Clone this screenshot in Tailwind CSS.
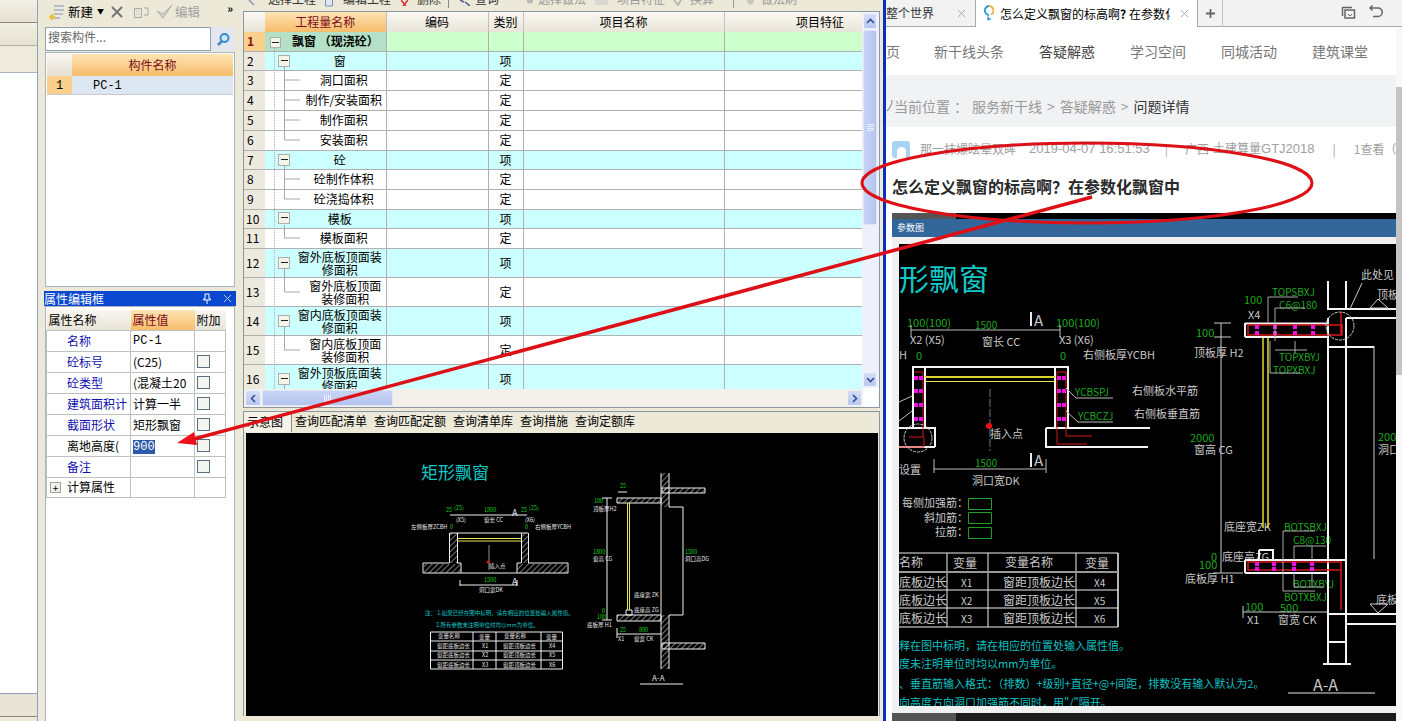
<!DOCTYPE html>
<html lang="zh-CN">
<head>
  <meta charset="UTF-8" />
  <title>飘窗定义</title>
  <script src="https://cdn.jsdelivr.net/npm/@tailwindcss/browser@4"></script>
</head>
<body class="relative w-[1402px] h-[721px] overflow-hidden bg-[#ece9d8] text-xs text-black [font-family:'Noto_Sans_CJK_SC',sans-serif]">
<div class="flex h-full">

  <!-- far left panel -->
  <div class="w-[38px] shrink-0 flex flex-col border-r border-[#8fa0b8]">
    <div class="h-[23px] bg-gradient-to-b from-[#f2efe4] to-[#e6e2d2] border-b border-[#8d897a]"></div>
    <div class="h-[23px] bg-gradient-to-b from-[#f2efe4] to-[#e6e2d2] border-b border-[#b5b1a0]"></div>
    <div class="h-[27px] bg-[#eeebdd] border-b border-[#aab3c0]"></div>
    <div class="flex-1 bg-white border-b border-[#8fa0b8]"></div>
    <div class="h-[23px] bg-[#e8e5d6] border-b border-[#8d897a]"></div>
    <div class="h-[4px] bg-[#ece9d8]"></div>
  </div>

  <!-- component list column -->
  <div class="w-[205px] shrink-0 flex flex-col pl-[6px] pr-[8px] bg-[#ece9d8]">
    <div class="h-[27px] flex items-center text-[12.500px] shrink-0 pb-[3px]">
      <svg width="20" height="20" viewBox="0 0 20 20" class="ml-[3px]">
        <path d="M7 4h10M7 8h10M7 12h9M7 16h6" stroke="#7d92b8" stroke-width="1.2"/>
        <path d="M5 12v6M2 15h6" stroke="#e8c040" stroke-width="2.4"/>
      </svg>
      <span class="ml-[1px]">新建</span>
      <span class="ml-[4px] text-[7px]">▼</span>
      <svg width="14" height="14" viewBox="0 0 14 14" class="ml-[6px]"><path d="M2 2l10 10M12 2L2 12" stroke="#707070" stroke-width="1.8"/></svg>
      <svg width="17" height="14" viewBox="0 0 17 14" class="ml-[9px]"><path d="M1.500 3.500h7v9h-7zM11 3h4v7h-4" fill="none" stroke="#a8a8a8"/><path d="M3 6h4M3 9h4" stroke="#c8c8c8"/></svg>
      <svg width="17" height="16" viewBox="0 0 17 16" class="ml-[6px]"><path d="M1 7l6 7 9-13-9 9z" fill="#d4d4cc" stroke="#b0b0a8"/></svg>
      <span class="ml-[2px] text-[#a0a0a0]">编辑</span>
      <span class="ml-auto mr-[2px] text-[11px] font-bold leading-none -mt-[8px]">»</span>
    </div>
    <div class="h-[24px] flex shrink-0 ml-[1px]">
      <div class="w-[166px] bg-white border border-[#8fa0b0] pl-[2px] text-[12px] leading-[18px] text-[#666]">搜索构件...</div>
      <div class="flex-1 flex items-center justify-center bg-[#e4e8ee]">
        <svg width="15" height="15" viewBox="0 0 15 15"><circle cx="8.500" cy="6" r="4" fill="#cfe6f8" stroke="#3d8ac8" stroke-width="2"/><path d="M5.500 9.500L2 13" stroke="#3d8ac8" stroke-width="2.600"/></svg>
      </div>
    </div>
    <div class="h-[235px] shrink-0 mt-[1px] ml-[1px] bg-white border border-[#a8b4c0] p-[1px]">
      <div class="flex h-[22px]">
        <div class="w-[25px] bg-gradient-to-b from-[#f8f6f0] to-[#e4e0d4]"></div>
        <div class="flex-1 bg-gradient-to-b from-[#fde4b4] to-[#f6bc68] text-center leading-[21px] text-[#7a0c20]">构件名称</div>
      </div>
      <div class="flex h-[19px] border-b border-[#c8ccd0]">
        <div class="w-[25px] bg-[#fbd08c] pl-[9px] leading-[20px] [font-family:'Liberation_Mono',monospace]">1</div>
        <div class="flex-1 bg-[#dde7f2] pl-[21px] leading-[20px] [font-family:'Liberation_Mono',monospace]">PC-1</div>
      </div>
    </div>
    <div class="h-[15px] shrink-0 mt-[4px] -mr-[1px] bg-[#0a48d0] text-white flex items-center text-[12px]">
      <span>属性编辑框</span>
      <svg width="10" height="11" viewBox="0 0 10 11" class="ml-auto"><path d="M3 1h4v5h1.500v1H1.500V6H3zM5 7v4" fill="none" stroke="#fff"/></svg>
      <svg width="9" height="9" viewBox="0 0 9 9" class="ml-[11px] mr-[4px]"><path d="M1 1l7 7M8 1L1 8" stroke="#b8ccf0"/></svg>
    </div>
    <div class="flex-1 ml-[1px] bg-white border border-[#a8b4c0] border-b-0 pt-[3px] text-[12px]">
      <table class="table-fixed border-collapse w-[179px]">
        <colgroup><col class="w-[84px]"/><col class="w-[64px]"/><col class="w-[31px]"/></colgroup>
        <tr class="h-[20px] bg-gradient-to-b from-[#f8f6f0] to-[#e8e4d8]">
          <td class="pl-[2px]">属性名称</td>
          <td class="pl-[2px] bg-gradient-to-b from-[#fde4b4] to-[#f6bc68] text-[#7a0c20]">属性值</td>
          <td class="pl-[2px]">附加</td>
        </tr>
        <tr class="h-[21px] border border-[#c0c0c0]">
          <td class="border border-[#c0c0c0] pl-[20px] text-[#1010b0]">名称</td>
          <td class="border border-[#c0c0c0] pl-[2px] [font-family:'Liberation_Mono',monospace]">PC-1</td>
          <td class="border border-[#c0c0c0]"></td>
        </tr>
        <tr class="h-[21px]">
          <td class="border border-[#c0c0c0] pl-[20px] text-[#1010b0]">砼标号</td>
          <td class="border border-[#c0c0c0] pl-[2px]">(C25)</td>
          <td class="border border-[#c0c0c0]"><div class="ml-[2px] w-[13px] h-[13px] border border-[#5a7080] bg-[#f4f4f0]"></div></td>
        </tr>
        <tr class="h-[21px]">
          <td class="border border-[#c0c0c0] pl-[20px] text-[#1010b0]">砼类型</td>
          <td class="border border-[#c0c0c0] pl-[2px] whitespace-nowrap overflow-hidden">(混凝土20</td>
          <td class="border border-[#c0c0c0]"><div class="ml-[2px] w-[13px] h-[13px] border border-[#5a7080] bg-[#f4f4f0]"></div></td>
        </tr>
        <tr class="h-[21px]">
          <td class="border border-[#c0c0c0] pl-[20px] whitespace-nowrap overflow-hidden text-[#1010b0]">建筑面积计</td>
          <td class="border border-[#c0c0c0] pl-[2px]">计算一半</td>
          <td class="border border-[#c0c0c0]"><div class="ml-[2px] w-[13px] h-[13px] border border-[#5a7080] bg-[#f4f4f0]"></div></td>
        </tr>
        <tr class="h-[21px]">
          <td class="border border-[#c0c0c0] pl-[20px] text-[#1010b0]">截面形状</td>
          <td class="border border-[#c0c0c0] pl-[2px]">矩形飘窗</td>
          <td class="border border-[#c0c0c0]"><div class="ml-[2px] w-[13px] h-[13px] border border-[#5a7080] bg-[#f4f4f0]"></div></td>
        </tr>
        <tr class="h-[21px]">
          <td class="border border-[#c0c0c0] pl-[20px] whitespace-nowrap overflow-hidden">离地高度(</td>
          <td class="border border-[#c0c0c0] pl-[2px]"><span class="bg-[#2a5aa8] text-white [font-family:'Liberation_Mono',monospace]">900</span></td>
          <td class="border border-[#c0c0c0]"><div class="ml-[2px] w-[13px] h-[13px] border border-[#5a7080] bg-[#f4f4f0]"></div></td>
        </tr>
        <tr class="h-[21px]">
          <td class="border border-[#c0c0c0] pl-[20px] text-[#1010b0]">备注</td>
          <td class="border border-[#c0c0c0]"></td>
          <td class="border border-[#c0c0c0]"><div class="ml-[2px] w-[13px] h-[13px] border border-[#5a7080] bg-[#f4f4f0]"></div></td>
        </tr>
        <tr class="h-[20px]">
          <td class="border border-[#c0c0c0] whitespace-nowrap">
            <div class="flex items-center pl-[3px]">
              <span class="w-[11px] h-[11px] border border-[#a0a0a0] bg-[#f0f0ea] text-[10px] leading-[9px] text-center">+</span>
              <span class="ml-[6px]">计算属性</span>
            </div>
          </td>
          <td class="border border-[#c0c0c0]"></td>
          <td class="border border-[#c0c0c0]"></td>
        </tr>
      </table>
    </div>
  </div>

  <!-- quantity grid and drawing -->
  <div class="w-[640px] shrink-0 flex flex-col bg-[#ece9d8]">
    <!-- toolbar, cut off by the top of the picture -->
    <div class="h-[11px] shrink-0 overflow-hidden flex items-start whitespace-nowrap text-[12px] leading-[16px] text-[#333] pl-[5px]">
      <svg width="8" height="6" viewBox="0 0 8 6"><path d="M1 0l5 5" stroke="#8a9ab8" stroke-width="1.500"/></svg>
      <span class="ml-[12px] w-[48px] -mt-[9px]">选择工程</span>
      <svg width="8" height="7" viewBox="0 0 8 7" class="ml-[9px]"><path d="M.5 0v6h7V0" fill="#dfe6f2" stroke="#7d92b8"/></svg>
      <span class="ml-[10px] w-[48px] -mt-[9px]">编辑工程</span>
      <svg width="7" height="6" viewBox="0 0 7 6" class="ml-[10px]"><path d="M0 0l5 6M7 0L2 6" stroke="#d83030" stroke-width="1.500"/></svg>
      <span class="ml-[9px] w-[24px] -mt-[9px]">删除</span>
      <div class="ml-[7px] w-px h-[8px] bg-[#888]"></div>
      <svg width="10" height="6" viewBox="0 0 10 6" class="ml-[11px]"><path d="M0 0l4 2M5 2l5 4" stroke="#50608a" stroke-width="1.600"/></svg>
      <span class="ml-[5px] w-[24px] -mt-[9px]">查询</span>
      <svg width="6" height="5" viewBox="0 0 6 5" class="ml-[28px]"><circle cx="3" cy="0" r="3.500" fill="#b8b8b8"/></svg>
      <span class="ml-[5px] w-[48px] -mt-[9px] text-[#999]">选择做法</span>
      <svg width="13" height="6" viewBox="0 0 13 6" class="ml-[9px]"><path d="M0 0h13v5H0z" fill="#d8d8d0"/></svg>
      <span class="ml-[9px] w-[48px] -mt-[9px] text-[#999]">项目特征</span>
      <svg width="9" height="6" viewBox="0 0 9 6" class="ml-[8px]"><path d="M1 0l4 5 3-5" fill="none" stroke="#b0b0a8" stroke-width="1.500"/></svg>
      <span class="ml-[8px] w-[24px] -mt-[9px] text-[#999]">换算</span>
      <div class="ml-[19px] w-px h-[8px] bg-[#999]"></div>
      <svg width="7" height="6" viewBox="0 0 7 6" class="ml-[13px]"><circle cx="3.500" cy="1" r="3.500" fill="#c8c8c0"/></svg>
      <span class="ml-[7px] -mt-[9px] text-[#999]">做法刷</span>
    </div>
    <div class="relative h-[397px] shrink-0 w-[637px] border border-[#8a96a4] bg-white overflow-hidden">
      <table class="table-fixed border-collapse w-[618px] text-[12px] text-center">
        <colgroup><col class="w-[21px]"/><col class="w-[121px]"/><col class="w-[102px]"/><col class="w-[35px]"/><col class="w-[201px]"/><col class="w-[138px]"/></colgroup>
        <tr class="h-[20px] bg-gradient-to-b from-[#faf8f2] to-[#e8e4d8]">
          <td></td>
          <td class="bg-gradient-to-b from-[#fde4b4] to-[#f6bc68] text-[#7a0c20]">工程量名称</td>
          <td class="border-l border-[#c0c0c0]">编码</td>
          <td class="border-l border-[#c0c0c0]">类别</td>
          <td class="border-l border-[#c0c0c0]">项目名称</td>
          <td class="border-l border-[#c0c0c0] text-right pr-[18px]">项目特征</td>
        </tr>
        <tr class="h-[19px] bg-[#ccffcc] border-b border-[#b0b0b0]"><td class="bg-[#fbd08c] text-[#8a1010] font-bold text-left pl-[3px]">1</td><td class="bg-[#b4e0c8] font-bold pl-[27px] whitespace-nowrap text-left">飘窗 （现浇砼）</td><td class="border-l border-[#b0b0b0]"></td><td class="border-l border-[#b0b0b0]"></td><td class="border-l border-[#b0b0b0]"></td><td class="border-l border-[#b0b0b0]"></td></tr>
        <tr class="h-[19px] bg-[#ccffff] border-b border-[#b0b0b0]"><td class="bg-[#ece9df] text-left pl-[3px]">2</td><td class="pl-[29px]">窗</td><td class="border-l border-[#b0b0b0]"></td><td class="border-l border-[#b0b0b0]">项</td><td class="border-l border-[#b0b0b0]"></td><td class="border-l border-[#b0b0b0]"></td></tr>
        <tr class="h-[20px] border-b border-[#b0b0b0]"><td class="bg-[#ece9df] text-left pl-[3px]">3</td><td class="pl-[37px]">洞口面积</td><td class="border-l border-[#b0b0b0]"></td><td class="border-l border-[#b0b0b0]">定</td><td class="border-l border-[#b0b0b0]"></td><td class="border-l border-[#b0b0b0]"></td></tr>
        <tr class="h-[20px] border-b border-[#b0b0b0]"><td class="bg-[#ece9df] text-left pl-[3px]">4</td><td class="pl-[37px] whitespace-nowrap">制作/安装面积</td><td class="border-l border-[#b0b0b0]"></td><td class="border-l border-[#b0b0b0]">定</td><td class="border-l border-[#b0b0b0]"></td><td class="border-l border-[#b0b0b0]"></td></tr>
        <tr class="h-[20px] border-b border-[#b0b0b0]"><td class="bg-[#ece9df] text-left pl-[3px]">5</td><td class="pl-[37px]">制作面积</td><td class="border-l border-[#b0b0b0]"></td><td class="border-l border-[#b0b0b0]">定</td><td class="border-l border-[#b0b0b0]"></td><td class="border-l border-[#b0b0b0]"></td></tr>
        <tr class="h-[20px] border-b border-[#b0b0b0]"><td class="bg-[#ece9df] text-left pl-[3px]">6</td><td class="pl-[37px]">安装面积</td><td class="border-l border-[#b0b0b0]"></td><td class="border-l border-[#b0b0b0]">定</td><td class="border-l border-[#b0b0b0]"></td><td class="border-l border-[#b0b0b0]"></td></tr>
        <tr class="h-[19px] bg-[#ccffff] border-b border-[#b0b0b0]"><td class="bg-[#ece9df] text-left pl-[3px]">7</td><td class="pl-[29px]">砼</td><td class="border-l border-[#b0b0b0]"></td><td class="border-l border-[#b0b0b0]">项</td><td class="border-l border-[#b0b0b0]"></td><td class="border-l border-[#b0b0b0]"></td></tr>
        <tr class="h-[20px] border-b border-[#b0b0b0]"><td class="bg-[#ece9df] text-left pl-[3px]">8</td><td class="pl-[37px]">砼制作体积</td><td class="border-l border-[#b0b0b0]"></td><td class="border-l border-[#b0b0b0]">定</td><td class="border-l border-[#b0b0b0]"></td><td class="border-l border-[#b0b0b0]"></td></tr>
        <tr class="h-[20px] border-b border-[#b0b0b0]"><td class="bg-[#ece9df] text-left pl-[3px]">9</td><td class="pl-[37px]">砼浇捣体积</td><td class="border-l border-[#b0b0b0]"></td><td class="border-l border-[#b0b0b0]">定</td><td class="border-l border-[#b0b0b0]"></td><td class="border-l border-[#b0b0b0]"></td></tr>
        <tr class="h-[19px] bg-[#ccffff] border-b border-[#b0b0b0]"><td class="bg-[#ece9df] text-left pl-[2px]">10</td><td class="pl-[29px]">模板</td><td class="border-l border-[#b0b0b0]"></td><td class="border-l border-[#b0b0b0]">项</td><td class="border-l border-[#b0b0b0]"></td><td class="border-l border-[#b0b0b0]"></td></tr>
        <tr class="h-[20px] border-b border-[#b0b0b0]"><td class="bg-[#ece9df] text-left pl-[2px]">11</td><td class="pl-[37px]">模板面积</td><td class="border-l border-[#b0b0b0]"></td><td class="border-l border-[#b0b0b0]">定</td><td class="border-l border-[#b0b0b0]"></td><td class="border-l border-[#b0b0b0]"></td></tr>
        <tr class="h-[29px] bg-[#ccffff] border-b border-[#b0b0b0] leading-[13px]"><td class="bg-[#ece9df] text-left pl-[2px]">12</td><td class="pl-[29px]">窗外底板顶面装修面积</td><td class="border-l border-[#b0b0b0]"></td><td class="border-l border-[#b0b0b0]">项</td><td class="border-l border-[#b0b0b0]"></td><td class="border-l border-[#b0b0b0]"></td></tr>
        <tr class="h-[29px] border-b border-[#b0b0b0] leading-[13px]"><td class="bg-[#ece9df] text-left pl-[2px]">13</td><td class="pl-[40px]">窗外底板顶面装修面积</td><td class="border-l border-[#b0b0b0]"></td><td class="border-l border-[#b0b0b0]">定</td><td class="border-l border-[#b0b0b0]"></td><td class="border-l border-[#b0b0b0]"></td></tr>
        <tr class="h-[29px] bg-[#ccffff] border-b border-[#b0b0b0] leading-[13px]"><td class="bg-[#ece9df] text-left pl-[2px]">14</td><td class="pl-[29px]">窗内底板顶面装修面积</td><td class="border-l border-[#b0b0b0]"></td><td class="border-l border-[#b0b0b0]">项</td><td class="border-l border-[#b0b0b0]"></td><td class="border-l border-[#b0b0b0]"></td></tr>
        <tr class="h-[29px] border-b border-[#b0b0b0] leading-[13px]"><td class="bg-[#ece9df] text-left pl-[2px]">15</td><td class="pl-[40px]">窗内底板顶面装修面积</td><td class="border-l border-[#b0b0b0]"></td><td class="border-l border-[#b0b0b0]">定</td><td class="border-l border-[#b0b0b0]"></td><td class="border-l border-[#b0b0b0]"></td></tr>
        <tr class="h-[29px] bg-[#ccffff] leading-[13px]"><td class="bg-[#ece9df] text-left pl-[2px]">16</td><td class="pl-[29px]">窗外顶板底面装修面积</td><td class="border-l border-[#b0b0b0]"></td><td class="border-l border-[#b0b0b0]">项</td><td class="border-l border-[#b0b0b0]"></td><td class="border-l border-[#b0b0b0]"></td></tr>
      </table>

      <!-- tree connectors; coordinates are the grid's own -->
      <svg class="absolute left-0 top-0" width="60" height="377" viewBox="244 12 60 377" fill="none">
        <path d="M274.500 48V389" stroke="#b0b0b0" stroke-dasharray="1 1"/>
        <path d="M284.500 67V140H300M284 80h16M284 100h16M284 120h16M284.500 166V199H300M284 179h16M284.500 225V238H300M284.500 269V292H300M284.500 327V350H300M284.500 385V389" stroke="#a8a8a8"/>
        <g fill="#f4f4ea" stroke="#a8b0a8">
          <rect x="270.500" y="37.500" width="10" height="10"/><rect x="278.500" y="55.500" width="11" height="11"/><rect x="278.500" y="154.500" width="11" height="11"/><rect x="278.500" y="212.500" width="11" height="11"/><rect x="278.500" y="257.500" width="11" height="11"/><rect x="278.500" y="315.500" width="11" height="11"/><rect x="278.500" y="373.500" width="11" height="11"/>
        </g>
        <path d="M272 42.500h7M281 60.500h7M281 159.500h7M281 217.500h7M281 262.500h7M281 320.500h7M281 378.500h7" stroke="#222"/>
      </svg>

      <!-- vertical scrollbar -->
      <div class="absolute right-0 top-0 w-[17px] h-[376px] bg-[#eef1fa] flex flex-col pl-px pt-px pb-px pr-[2px]">
        <div class="h-[16px] bg-gradient-to-b from-[#d4def6] to-[#b8c8f0] rounded-[2px] border border-[#eef2fc] flex items-center justify-center">
          <svg width="9" height="6" viewBox="0 0 9 6"><path d="M1 5l3.500-3.500L8 5" fill="none" stroke="#334f90" stroke-width="1.600"/></svg>
        </div>
        <div class="h-[195px] mt-px bg-gradient-to-r from-[#c8d4f6] to-[#b4c4ee] rounded-[2px] border border-[#e0e6f8] flex items-center justify-center">
          <svg width="7" height="7" viewBox="0 0 7 7"><path d="M0 .5h7M0 2.500h7M0 4.500h7M0 6.500h7" stroke="#eef2fc"/></svg>
        </div>
        <div class="flex-1"></div>
        <div class="h-[15px] bg-gradient-to-b from-[#d4def6] to-[#b8c8f0] rounded-[2px] border border-[#eef2fc] flex items-center justify-center">
          <svg width="9" height="6" viewBox="0 0 9 6"><path d="M1 1l3.500 3.500L8 1" fill="none" stroke="#334f90" stroke-width="1.600"/></svg>
        </div>
      </div>
      <!-- horizontal scrollbar -->
      <div class="absolute left-0 top-[377px] w-[619px] h-[18px] bg-[#f2f0e8] flex p-px">
        <div class="w-[16px] bg-gradient-to-b from-[#d4def6] to-[#b8c8f0] rounded-[2px] border border-[#eef2fc] flex items-center justify-center">
          <svg width="6" height="9" viewBox="0 0 6 9"><path d="M5 1L1.500 4.500 5 8" fill="none" stroke="#334f90" stroke-width="1.600"/></svg>
        </div>
        <div class="w-[131px] ml-px bg-gradient-to-b from-[#c8d4f6] to-[#b4c4ee] rounded-[2px] border border-[#e0e6f8] flex items-center justify-center">
          <svg width="7" height="7" viewBox="0 0 7 7"><path d="M.5 0v7M2.500 0v7M4.500 0v7M6.500 0v7" stroke="#eef2fc"/></svg>
        </div>
        <div class="flex-1"></div>
        <div class="w-[15px] bg-gradient-to-b from-[#d4def6] to-[#b8c8f0] rounded-[2px] border border-[#eef2fc] flex items-center justify-center">
          <svg width="6" height="9" viewBox="0 0 6 9"><path d="M1 1l3.500 3.500L1 8" fill="none" stroke="#334f90" stroke-width="1.600"/></svg>
        </div>
      </div>
    </div>

    <div class="mt-[3px] w-[637px] flex flex-col border border-[#8a96a4] border-b-0">
      <div class="h-[20px] shrink-0 flex items-start bg-[#ece9d8] text-[12px] leading-[18px] whitespace-nowrap">
        <span class="w-[48px] h-full pl-[3px] pt-[1px] bg-[#f4f2e8] border-r border-[#8a8a7a]">示意图</span>
        <span class="ml-[3px]">查询匹配清单</span>
        <span class="ml-[7px]">查询匹配定额</span>
        <span class="ml-[7px]">查询清单库</span>
        <span class="ml-[7px]">查询措施</span>
        <span class="ml-[7px]">查询定额库</span>
      </div>
      <svg class="ml-[2px] mt-px bg-black" width="632" height="283" viewBox="246 433 632 283" fill="none" font-family="'Noto Sans CJK SC',sans-serif">
        <defs>
          <pattern id="hatch" width="4" height="4" patternUnits="userSpaceOnUse" patternTransform="rotate(-45)"><path d="M0 0h4" stroke="#f0f0f0" stroke-width="1"/></pattern>
        </defs>
        <text x="421" y="479" font-size="17" fill="#14c8c8">矩形飘窗</text>
        <g font-size="5.500" fill="#19d019">
          <text x="446" y="512">25</text><text x="454" y="510">(25)</text><text x="484" y="512">1800</text><text x="521" y="512">25</text><text x="529" y="510">(25)</text><text x="484" y="582">1500</text><text x="450" y="529">0</text><text x="525" y="529">0</text>
          <text x="594" y="503">100</text><text x="593" y="554">1800</text><text x="620" y="488">25</text><text x="639" y="632">800</text><text x="620" y="632">25</text><text x="602" y="613">0</text><text x="597" y="619">100</text><text x="685" y="554">1500</text>
        </g>
        <g font-size="5.500" fill="#e8e8e8">
          <text x="484" y="522">窗长 CC</text><text x="456" y="522">(X5)</text><text x="525" y="522">(X6)</text><text x="411" y="529">左侧板厚ZCBH</text><text x="535" y="529">右侧板厚YCBH</text>
          <text x="489" y="568">插入点</text><text x="479" y="592">洞口宽DK</text><text x="593" y="511">顶板厚H2</text><text x="593" y="561">窗高 CG</text><text x="685" y="561">洞口高DG</text><text x="634" y="597">底座宽 ZK</text><text x="634" y="612">底座高 ZG</text><text x="587" y="627">底板厚 H1</text><text x="634" y="641">窗宽 CK</text><text x="618" y="641">X1</text>
          <text x="512" y="516" font-size="9">A</text><text x="512" y="585" font-size="9">A</text>
        </g>
        <g stroke="#f0f0f0">
          <path d="M450 515h77M450 533h78M449.500 533v30M457.500 533v30M521.500 533v30M528.500 533v30M423 563h26M457 563h4M517 563h4M528 563h40M423 573h145M423 563v10M568 563v10M461 563v10M517 563v10M460 585h57M460 580v6M517 580v6"/>
          <path d="M661 473v196M669 473v34M669 615v54M617 498h44v5h-44zM617 615h44v6h-44zM662 488h43v5h-43zM662 643h43v6h-43zM669 507h14M669 615h14M683 507v108M607 498v122M602 498h10M602 620h10M617 634h44M617 628v10M626 610h6v5h-6zM618 492h9"/>
          <path d="M640 684h43"/>
        </g>
        <g fill="url(#hatch)">
          <rect x="449.500" y="533" width="8" height="30"/><rect x="521" y="533" width="7" height="30"/><rect x="424" y="564" width="37" height="9"/><rect x="517" y="564" width="50" height="9"/><rect x="661" y="473" width="8" height="34"/><rect x="661" y="615" width="8" height="54"/><rect x="617" y="498" width="44" height="5"/><rect x="617" y="615" width="44" height="6"/><rect x="662" y="488" width="43" height="5"/><rect x="662" y="643" width="43" height="6"/>
        </g>
        <path d="M457 538.500h64M457 541h64M627.500 503v107M629.500 503v107" stroke="#e8e850"/>
        <path d="M489 545v25" stroke="#909090"/>
        <circle cx="488" cy="562" r="1.500" fill="#f01010"/>
        <g font-size="5.500" fill="#14c8c8">
          <text x="425" y="615">注： 1.如果已经在图中标明，请在相应的位置处输入属性值。</text>
          <text x="436" y="627">2.所有参数未注明单位时均以mm为单位。</text>
        </g>
        <path d="M430.500 632h132v37h-132zM430.500 641h132M430.500 651h132M430.500 660h132M473 632v37M496 632v37M541 632v37" stroke="#f0f0f0"/>
        <g font-size="5.500" fill="#e0e0e0">
          <text x="438" y="638">变量名称</text><text x="479" y="639">变量</text><text x="504" y="638">变量名称</text><text x="546" y="639">变量</text>
          <text x="437" y="648">窗距底板边长</text><text x="482" y="648">X1</text><text x="503" y="648">窗距顶板边长</text><text x="549" y="648">X4</text>
          <text x="437" y="657">窗距底板边长</text><text x="482" y="657">X2</text><text x="503" y="657">窗距顶板边长</text><text x="549" y="657">X5</text>
          <text x="437" y="667">窗距底板边长</text><text x="482" y="667">X3</text><text x="503" y="667">窗距顶板边长</text><text x="549" y="667">X6</text>
        </g>
        <text x="652" y="681" font-size="8" fill="#e0e0e0">A-A</text>
      </svg>
    </div>
  </div>

  <!-- divider in front of the browser window -->
  <div class="w-[3px] shrink-0 bg-[#0a30c0]"></div>

  <!-- browser window -->
  <div class="relative flex-1 flex flex-col min-w-0 bg-white">
    <div class="relative h-[27px] shrink-0 bg-[#f2f2f2] border-b border-[#a8a8a8] flex items-center text-[12px] whitespace-nowrap overflow-visible">
      <span class="text-[#333] w-[67px]">整个世界</span>
      <svg width="9" height="9" viewBox="0 0 9 9" class="absolute left-[71px] top-[9px]"><path d="M1 1l7 7M8 1L1 8" stroke="#a8a8a8"/></svg>
      <div class="absolute left-[89px] top-0 w-[223px] h-[27px] bg-white border-x border-[#a8a8a8] flex items-center pl-[7px]">
        <svg width="11" height="17" viewBox="0 0 11 17"><path d="M6 1a4.500 4.500 0 0 1 2 8.500" fill="none" stroke="#f4b040" stroke-width="1.800"/><path d="M6 1a4.500 4.500 0 0 0-3 7.500l3 2" fill="none" stroke="#2a9adc" stroke-width="1.800"/><path d="M5 14h3M5 11.500v4" stroke="#2a9adc" stroke-width="1.500"/></svg>
        <span class="ml-[6px] w-[170px] overflow-hidden text-[12px]">怎么定义飘窗的标高啊<b>?</b> 在参数化</span>
        <svg width="9" height="9" viewBox="0 0 9 9" class="ml-[10px]"><path d="M1 1l7 7M8 1L1 8" stroke="#a8a8a8"/></svg>
      </div>
      <svg width="11" height="11" viewBox="0 0 11 11" class="absolute left-[319px] top-[8px]"><path d="M5.500 1v9M1 5.500h9" stroke="#666" stroke-width="1.800"/></svg>
      <div class="absolute left-[336px] top-0 h-[27px] w-px bg-[#c0c0c0]"></div>
      <svg width="16" height="15" viewBox="0 0 16 15" class="absolute left-[454px] top-[5px]"><path d="M2.500 11V2.500H12M5 5h9.500v8H5z" fill="none" stroke="#666" stroke-width="1.500"/><path d="M8 9l2 2 2-2" fill="none" stroke="#666"/></svg>
      <svg width="15" height="15" viewBox="0 0 15 15" class="absolute left-[482px] top-[5px]"><path d="M2 3h8a4 4 0 0 1 0 8.500H5M4.500 .5L2 3l2.500 2.500" fill="none" stroke="#666" stroke-width="1.500"/></svg>
    </div>

    <div class="h-[48px] shrink-0 bg-white flex items-center text-[14px] text-[#777] whitespace-nowrap shadow-[0_1px_3px_rgba(0,0,0,0.12)]">
      <span class="w-[48px]">页</span>
      <span class="w-[105px]">新干线头条</span>
      <span class="w-[91px] text-[#444]">答疑解惑</span>
      <span class="w-[91px]">学习空间</span>
      <span class="w-[91px]">同城活动</span>
      <span>建筑课堂</span>
    </div>

    <div class="h-[52px] shrink-0 bg-[#f1f2f4] flex items-center pt-[10px] text-[14px] text-[#999] whitespace-nowrap">
      <svg width="7" height="16" viewBox="0 0 7 16" class="mr-[1px]"><path d="M6 2c0 5-2 8-5 11" fill="none" stroke="#999" stroke-width="1.300"/></svg>
      <span>当前位置</span>
      <span class="mx-[4px]">：</span>
      <span>服务新干线</span>
      <span class="mx-[5px]">&gt;</span>
      <span>答疑解惑</span>
      <span class="mx-[5px]">&gt;</span>
      <span class="text-[#333]">问题详情</span>
    </div>

    <div class="flex-1 relative pl-[6px] pr-[6px]">
      <div class="h-[44px] flex items-center text-[12px] text-[#a0a0a0] whitespace-nowrap overflow-hidden">
        <div class="w-[18px] h-[17px] rounded-[3px] bg-[#a8d4f4] flex items-end justify-center shrink-0"><div class="w-[9px] h-[11px] rounded-t-full bg-white"></div></div>
        <span class="ml-[10px]">那一抹嫘眩晕双眸</span>
        <span class="ml-[13px] text-[13px] [font-family:'Liberation_Sans',sans-serif]">2019-04-07 16:51:53</span>
        <span class="ml-[15px]">|</span>
        <span class="ml-[17px]">广西</span>
        <span class="ml-[4px]">土建算量<span class="[font-family:'Liberation_Sans',sans-serif] text-[13px]">GTJ2018</span></span>
        <span class="ml-[18px]">|</span>
        <span class="ml-[18px]">1查看（</span>
      </div>
      <div class="text-[16px] font-bold leading-[22px] text-[#2a2a2a] whitespace-nowrap mt-[4px]">怎么定义飘窗的标高啊<span class="[font-family:'Noto_Sans_CJK_TC',sans-serif]">？</span>在参数化飘窗中</div>
      <div class="mt-[16px] w-[504px] h-[6px] flex"><div class="w-[64px] bg-[#555]"></div><div class="flex-1 bg-black"></div></div>
      <div class="w-[504px] h-[18px] bg-[#336699] text-[9px] leading-[18px] text-white pl-[5px]">参数图</div>
      <div class="w-[504px] h-[7px] bg-[#f0f0f0]"></div>
      <div class="w-[504px] pl-[7px] bg-[#f0f0f0]">
        <svg class="bg-black block" width="497" height="462" viewBox="899 243 497 462" fill="none" font-family="'Noto Sans CJK SC',sans-serif">
          <text x="899" y="289" font-size="30" fill="#14c8c8">形飘窗</text>
          <g font-size="11" fill="#1fa81f">
            <text x="907" y="326">100(100)</text><text x="975" y="328" font-size="10">1500</text><text x="1056" y="326">100(100)</text><text x="916" y="359">0</text><text x="1060" y="359">0</text><text x="1075" y="395" font-size="10">YCBSPJ</text><text x="1078" y="419" font-size="10">YCBCZJ</text><text x="975" y="466" font-size="10">1500</text>
            <text x="1272" y="295" font-size="10">TOPSBXJ</text><text x="1279" y="308" font-size="10">C6@180</text><text x="1279" y="360" font-size="10">TOPXBYJ</text><text x="1273" y="373" font-size="10">TOPXBXJ</text><text x="1244" y="303">100</text><text x="1196" y="336">100</text><text x="1190" y="441">2000</text><text x="1378" y="440">200</text>
            <text x="1284" y="530" font-size="10">BOTSBXJ</text><text x="1293" y="543" font-size="10">C8@130</text><text x="1293" y="587" font-size="10">BOTXBYJ</text><text x="1284" y="600" font-size="10">BOTXBXJ</text><text x="1211" y="560">0</text><text x="1199" y="568">100</text><text x="1245" y="610">100</text><text x="1280" y="611">500</text>
          </g>
          <g font-size="11" fill="#c8c8c8">
            <text x="910" y="343">X2 (X5)</text><text x="982" y="345">窗长 CC</text><text x="1059" y="343">X3 (X6)</text><text x="1083" y="358">右侧板厚YCBH</text><text x="899" y="358">H</text>
            <text x="1132" y="394">右侧板水平筋</text><text x="1134" y="417">右侧板垂直筋</text><text x="990" y="437">插入点</text><text x="972" y="484">洞口宽DK</text><text x="899" y="473">设置</text>
            <text x="1194" y="356">顶板厚 H2</text><text x="1194" y="453">窗高 CG</text><text x="1378" y="453">洞口</text><text x="1361" y="278">此处见</text><text x="1377" y="298">顶板</text><text x="1248" y="318">X4</text>
            <text x="1224" y="530">底座宽ZK</text><text x="1222" y="560">底座高ZG</text><text x="1185" y="582">底板厚 H1</text><text x="1247" y="623">X1</text><text x="1278" y="623">窗宽 CK</text><text x="1376" y="603">底板</text>
            <text x="902" y="506">每侧加强筋：</text><text x="924" y="521">斜加筋：</text><text x="935" y="535">拉筋：</text>
          </g>
          <text x="1034" y="325" font-size="15" fill="#c8c8c8">A</text><text x="1034" y="465" font-size="15" fill="#c8c8c8">A</text>
          <path d="M1031 311v14M1031 452v14" stroke="#e8e8e8" stroke-width="2"/>
          <text x="1313" y="690" font-size="16" fill="#c8c8c8">A-A</text>
          <path d="M1288 692h87" stroke="#e8e8e8"/>

          <!-- front elevation -->
          <path d="M911 329h149M911 324v12M1060 324v12M934 468h112M934 458v14M1046 458v14" stroke="#bbb"/>
          <path d="M990 388v62" stroke="#777" stroke-dasharray="8 2"/>
          <path d="M912 366h157M913 366v60M925 366v60M1055 366v60M1068 366v60M899 427h36v19M899 446h36M1046 427v19h102M1046 427h104" stroke="#f4f4f4" stroke-width="2"/>
          <path d="M925 376h130" stroke="#d8d830" stroke-width="2"/><path d="M925 380.500h130" stroke="#e8e850"/>
          <path d="M914 371h9v65h-14M924 436v10h-25M1057 371h9v64h26M1057 371v72h30" stroke="#d81818"/>
          <g fill="#f010e0">
            <rect x="914" y="375" width="4" height="4"/><rect x="919" y="375" width="4" height="4"/><rect x="914" y="388" width="4" height="4"/><rect x="919" y="388" width="4" height="4"/><rect x="914" y="402" width="4" height="4"/><rect x="919" y="402" width="4" height="4"/><rect x="914" y="416" width="4" height="4"/><rect x="919" y="416" width="4" height="4"/>
            <rect x="1057" y="375" width="4" height="4"/><rect x="1062" y="375" width="4" height="4"/><rect x="1057" y="388" width="4" height="4"/><rect x="1062" y="388" width="4" height="4"/><rect x="1057" y="402" width="4" height="4"/><rect x="1062" y="402" width="4" height="4"/><rect x="1057" y="416" width="4" height="4"/><rect x="1062" y="416" width="4" height="4"/>
          </g>
          <circle cx="989" cy="425" r="3" fill="#f01010"/>
          <circle cx="918" cy="437" r="14" stroke="#ccc" stroke-dasharray="3 1"/>
          <path d="M1066 387l10 10h37M1066 410l12 11h35M912 395l-13 6M912 410l-13 10" stroke="#bbb"/>

          <!-- rebar boxes and variable table -->
          <path d="M968.500 497.500h23v11h-23zM968.500 511.500h23v11h-23zM968.500 526.500h23v11h-23z" stroke="#20a020"/>
          <path d="M899 552h219v74H899M1118 552v74M899 589h219M899 607h219M947 552v74M988 552v74M1076 552v74" stroke="#f0f0f0"/>
          <path d="M899 571h219" stroke="#999" stroke-width="2"/>
          <g font-size="12" fill="#c8c8c8">
            <text x="899" y="566">名称</text><text x="953" y="567">变量</text><text x="1005" y="566">变量名称</text><text x="1085" y="567">变量</text>
            <text x="899" y="586">底板边长</text><text x="961" y="586" font-size="10">X1</text><text x="1003" y="586">窗距顶板边长</text><text x="1094" y="586" font-size="10">X4</text>
            <text x="899" y="604">底板边长</text><text x="961" y="604" font-size="10">X2</text><text x="1003" y="604">窗距顶板边长</text><text x="1094" y="604" font-size="10">X5</text>
            <text x="899" y="622">底板边长</text><text x="961" y="622" font-size="10">X3</text><text x="1003" y="622">窗距顶板边长</text><text x="1094" y="622" font-size="10">X6</text>
          </g>
          <g font-size="11" fill="#12c0c0">
            <text x="899" y="649">释在图中标明，请在相应的位置处输入属性值。</text>
            <text x="899" y="667">度未注明单位时均以mm为单位。</text>
            <text x="899" y="687">、垂直筋输入格式：（排数）+级别+直径+@+间距，排数没有输入默认为2。</text>
            <text x="899" y="706">向高度方向洞口加强筋不同时，用"/"隔开。</text>
          </g>

          <!-- section -->
          <path d="M1221 322v250M1214 322h17M1214 336h17M1213 572h30M1374 345v213M1243 611h85M1243 605v12" stroke="#ccc"/>
          <path d="M1263 336v191M1268 336v191" stroke="#e0e030" stroke-width="1.500"/>
          <path d="M1245 322.500h83M1245 336h83M1245 322v14M1328 280v29M1328 317v346M1346 280v29M1346 317v346M1328 308h68M1346 317h50M1328 346h46M1346 623h50M1328 613h68M1328 641h18M1323 663h28M1245 559h101M1245 572h83M1245 559v13M1259 549h14v10M1259 549v10" stroke="#f4f4f4" stroke-width="2"/>
          <path d="M1248 324h94v10h-94zM1341 311v22M1248 561h93v8h-93zM1341 561v48" stroke="#d81818" stroke-width="1.500"/>
          <g fill="#f010e0">
            <rect x="1255" y="324" width="4" height="4"/><rect x="1255" y="330" width="4" height="4"/><rect x="1273" y="324" width="4" height="4"/><rect x="1273" y="330" width="4" height="4"/><rect x="1293" y="324" width="4" height="4"/><rect x="1293" y="330" width="4" height="4"/><rect x="1311" y="324" width="4" height="4"/><rect x="1311" y="330" width="4" height="4"/>
            <rect x="1255" y="561" width="4" height="4"/><rect x="1255" y="566" width="4" height="4"/><rect x="1272" y="561" width="4" height="4"/><rect x="1272" y="566" width="4" height="4"/><rect x="1292" y="561" width="4" height="4"/><rect x="1292" y="566" width="4" height="4"/><rect x="1310" y="561" width="4" height="4"/><rect x="1310" y="566" width="4" height="4"/>
          </g>
          <circle cx="1340" cy="325" r="14" stroke="#ccc" stroke-dasharray="3 1"/>
          <path d="M1268 322v-26h30M1275 340v-33h30M1275 349h32M1295 340v12M1270 340v32h30M1283 530h32M1283 530v60h32M1294 545h32M1294 545v14M1312 545v14M1294 572v14h30M1312 572v14" stroke="#aaa"/>
          <path d="M1350 308l12-26" stroke="#ccc"/>
          <path d="M1384 298l-8 9h18zM1384 612l-8-9h18z" stroke="#ccc" transform="translate(-6 0)"/>
        </svg>
      </div>
      <div class="w-[504px] h-[7px] bg-[#f0f0f0]"></div>
      <div class="w-[504px] h-[10px] flex"><div class="w-[64px] bg-[#555]"></div><div class="flex-1 bg-[#1c1c1c]"></div></div>
    </div>

    <div class="absolute right-0 top-[27px] bottom-0 w-[6px] bg-[#f8f8f8]">
      <div class="mt-[60px] h-[288px] bg-[#c4c4c4]"></div>
    </div>
  </div>
</div>

<!-- red annotation marks drawn over the screenshot -->
<svg class="absolute left-0 top-0 pointer-events-none" width="1402" height="721" viewBox="0 0 1402 721" fill="none">
  <ellipse cx="1087" cy="183" rx="225" ry="40" stroke="#dd1018" stroke-width="3"/>
  <path d="M1092 197L190 440" stroke="#dd1018" stroke-width="3.500"/>
  <path d="M177 443l17-11 3 13z" fill="#ee1018"/>
</svg>
</body>
</html>
